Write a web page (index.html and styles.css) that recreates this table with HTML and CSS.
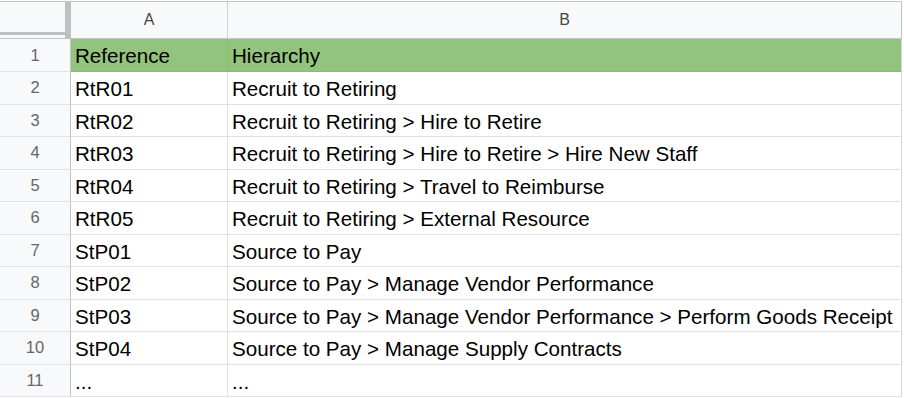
FILE: index.html
```html
<!DOCTYPE html>
<html>
<head>
<meta charset="utf-8">
<link rel="stylesheet" href="styles.css">
</head>
<body>
<div class="sheet">
  <div class="row colhead">
    <div class="corner"><div class="corner-inner"></div></div>
    <div class="ch">A</div>
    <div class="ch">B</div>
  </div>
  <div class="row head">
    <div class="rh">1</div>
    <div class="c">Reference</div>
    <div class="c">Hierarchy</div>
  </div>
  <div class="row"><div class="rh">2</div><div class="c">RtR01</div><div class="c">Recruit to Retiring</div></div>
  <div class="row"><div class="rh">3</div><div class="c">RtR02</div><div class="c">Recruit to Retiring &gt; Hire to Retire</div></div>
  <div class="row"><div class="rh">4</div><div class="c">RtR03</div><div class="c">Recruit to Retiring &gt; Hire to Retire &gt; Hire New Staff</div></div>
  <div class="row"><div class="rh">5</div><div class="c">RtR04</div><div class="c">Recruit to Retiring &gt; Travel to Reimburse</div></div>
  <div class="row"><div class="rh">6</div><div class="c">RtR05</div><div class="c">Recruit to Retiring &gt; External Resource</div></div>
  <div class="row"><div class="rh">7</div><div class="c">StP01</div><div class="c">Source to Pay</div></div>
  <div class="row"><div class="rh">8</div><div class="c">StP02</div><div class="c">Source to Pay &gt; Manage Vendor Performance</div></div>
  <div class="row"><div class="rh">9</div><div class="c">StP03</div><div class="c">Source to Pay &gt; Manage Vendor Performance &gt; Perform Goods Receipt</div></div>
  <div class="row"><div class="rh">10</div><div class="c">StP04</div><div class="c">Source to Pay &gt; Manage Supply Contracts</div></div>
  <div class="row"><div class="rh">11</div><div class="c">...</div><div class="c">...</div></div>
</div>
</body>
</html>
```
FILE: styles.css
```css
html, body {
  margin: 0;
  padding: 0;
  background: #ffffff;
}
body {
  font-family: "Liberation Sans", Arial, sans-serif;
  overflow: hidden;
}
.sheet {
  width: 902px;
  padding-top: 1px;
}
.row {
  display: grid;
  grid-template-columns: 71px 157px 674px;
  height: 32.5px;
}
.row > div {
  box-sizing: border-box;
  border-right: 1px solid #e2e2e2;
  border-bottom: 1px solid #e2e2e2;
  overflow: hidden;
  white-space: nowrap;
}
.colhead {
  height: 38px;
  border-top: 1px solid #c4c4c4;
  box-sizing: border-box;
}
.colhead > div {
  background: #f8f9fa;
  border-bottom: 1px solid #c4c4c4;
  border-right: 1px solid #d0d0d0;
}
.colhead > .ch:last-child {
  border-right: 1px solid #c4c4c4;
}
.corner {
  border-right: 6px solid #c0c0c0 !important;
}
.corner-inner {
  height: 30px;
  border-bottom: 3px solid #c0c0c0;
}
.ch {
  display: flex;
  align-items: center;
  justify-content: center;
  font-size: 16px;
  color: #444746;
}
.rh {
  background: #f8f9fa;
  display: flex;
  align-items: center;
  justify-content: center;
  font-size: 16.5px;
  color: #666666;
  border-right: 1px solid #c4c4c4 !important;
}
.c {
  font-size: 20.6px;
  color: #000000;
  padding: 5px 0 0 4px;
  line-height: 24px;
}
.head {
  height: 33px;
}
.head .c {
  background: #93c47d;
  border-right-color: #89ba73;
  border-bottom-color: #89ba73;
}
.row > .c:last-child {
  border-right-color: #d8d8d8;
}
```
